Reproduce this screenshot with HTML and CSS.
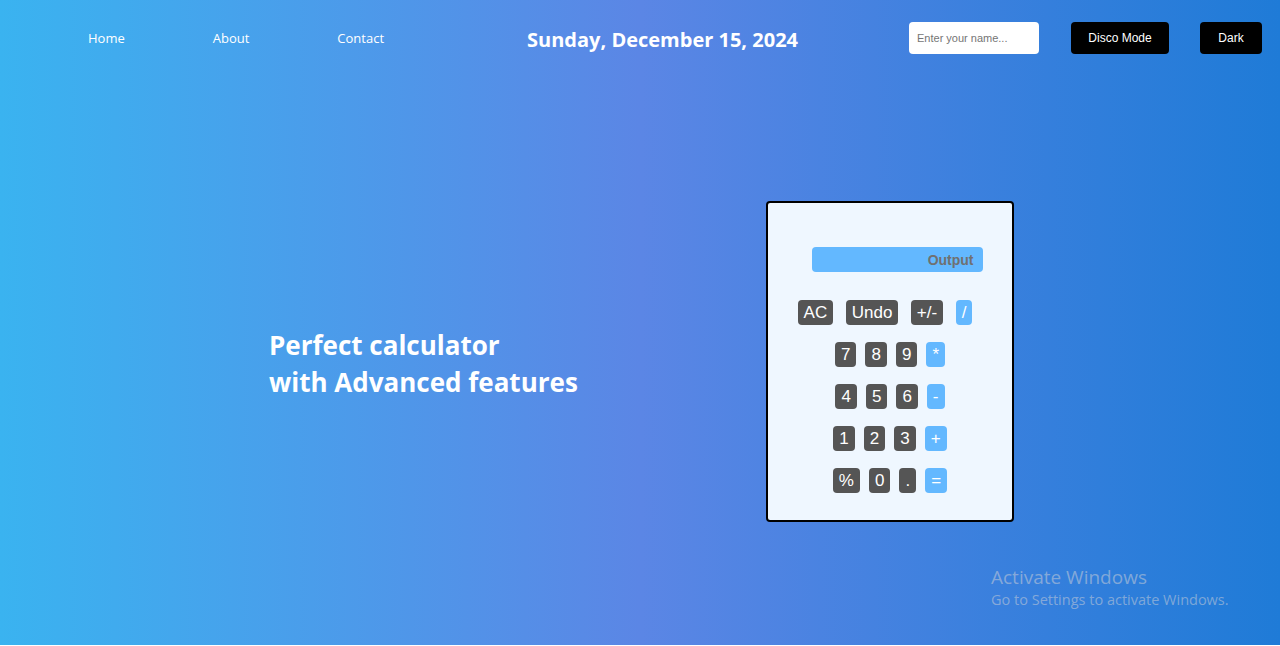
FILE: index.html
```html
<!DOCTYPE html>
<html lang="en">
<head>
<meta charset="utf-8">
<title>Calculator</title>
<link rel="stylesheet" href="styles.css">
</head>
<body>
<div class="page">
  <header class="topbar">
    <nav class="links">
      <a href="#">Home</a>
      <a href="#">About</a>
      <a href="#">Contact</a>
    </nav>
    <div class="date">Sunday, December 15, 2024</div>
    <div class="controls">
      <input class="name" type="text" placeholder="Enter your name...">
      <button class="btn disco">Disco Mode</button>
      <button class="btn dark">Dark</button>
    </div>
  </header>
  <main class="hero">
    <h1 class="tagline">Perfect calculator<br>with Advanced features</h1>
    <section class="calc">
      <div class="output">Output</div>
      <div class="row r1">
        <button class="key">AC</button>
        <button class="key">Undo</button>
        <button class="key">+/-</button>
        <button class="key op">/</button>
      </div>
      <div class="row">
        <button class="key">7</button>
        <button class="key">8</button>
        <button class="key">9</button>
        <button class="key op">*</button>
      </div>
      <div class="row">
        <button class="key">4</button>
        <button class="key">5</button>
        <button class="key">6</button>
        <button class="key op">-</button>
      </div>
      <div class="row">
        <button class="key">1</button>
        <button class="key">2</button>
        <button class="key">3</button>
        <button class="key op">+</button>
      </div>
      <div class="row">
        <button class="key">%</button>
        <button class="key">0</button>
        <button class="key">.</button>
        <button class="key op">=</button>
      </div>
    </section>
  </main>
  <div class="watermark">
    <div class="wm-title">Activate Windows</div>
    <div class="wm-sub">Go to Settings to activate Windows.</div>
  </div>
</div>
</body>
</html>
```

FILE: styles.css
```css
* { box-sizing: border-box; }
html, body { margin: 0; padding: 0; background: #ffffff; }
body { font-family: "Open Sans", "Noto Sans", sans-serif; }

.page {
  position: relative;
  height: 645px;
  background: linear-gradient(to right, #3ab3f0 0%, #5b86e5 50%, #1f7bd7 100%);
  display: flex;
  flex-direction: column;
  overflow: hidden;
}

.topbar {
  height: 76px;
  display: flex;
  align-items: center;
  padding-right: 18px;
}

.links {
  display: flex;
  gap: 88px;
  padding-left: 88px;
}
.links a {
  color: #ffffff;
  text-decoration: none;
  font-size: 13px;
}

.date {
  margin-left: 143px;
  color: #ffffff;
  font-weight: 700;
  font-size: 20px;
  padding-top: 3px;
}

.controls {
  margin-left: auto;
  display: flex;
  align-items: center;
}

.name {
  width: 130px;
  height: 32px;
  border: none;
  border-radius: 4px;
  padding: 0 8px;
  font-family: "Liberation Sans", Arial, sans-serif;
  font-size: 11px;
  background: #ffffff;
}
.name::placeholder { color: #757575; }

.btn {
  height: 32px;
  border: none;
  border-radius: 4px;
  background: #000000;
  color: #ffffff;
  font-family: "Liberation Sans", Arial, sans-serif;
  font-size: 12px;
}
.disco { width: 98px; margin-left: 32px; }
.dark { width: 62px; margin-left: 31px; }

.hero {
  flex: 1;
  display: flex;
  align-items: center;
  padding-left: 269px;
  padding-top: 2px;
}

.tagline {
  margin: 0;
  width: 497px;
  padding-top: 5px;
  color: #ffffff;
  font-size: 26px;
  font-weight: 700;
  line-height: 37px;
}

.calc {
  width: 248px;
  height: 321px;
  background: #eff7ff;
  border: 2px solid #000000;
  border-radius: 4px;
  display: flex;
  flex-direction: column;
  align-items: center;
  padding-top: 44px;
  gap: 17px;
}

.output {
  width: 171px;
  height: 25px;
  margin-left: 14px;
  margin-bottom: 11px;
  background: #63b8ff;
  border-radius: 4px;
  color: #707070;
  font-family: "Liberation Sans", Arial, sans-serif;
  font-weight: 700;
  font-size: 14px;
  text-align: right;
  padding-right: 9px;
  line-height: 26px;
}

.row {
  display: flex;
  gap: 9px;
}
.row.r1 { gap: 12.5px; margin-left: -10px; }

.key {
  height: 25px;
  padding: 0 6px;
  border: none;
  border-radius: 4px;
  background: #555555;
  color: #ffffff;
  font-family: "Liberation Sans", Arial, sans-serif;
  font-size: 17px;
  line-height: 25px;
}
.key.op {
  background: #63b8ff;
}

.watermark {
  position: absolute;
  left: 991px;
  top: 565px;
  color: rgba(200, 205, 215, 0.55);
  font-family: "Open Sans", "Noto Sans", sans-serif;
}
.wm-title { font-size: 19px; line-height: 25px; }
.wm-sub { font-size: 14.5px; line-height: 20px; }
```
